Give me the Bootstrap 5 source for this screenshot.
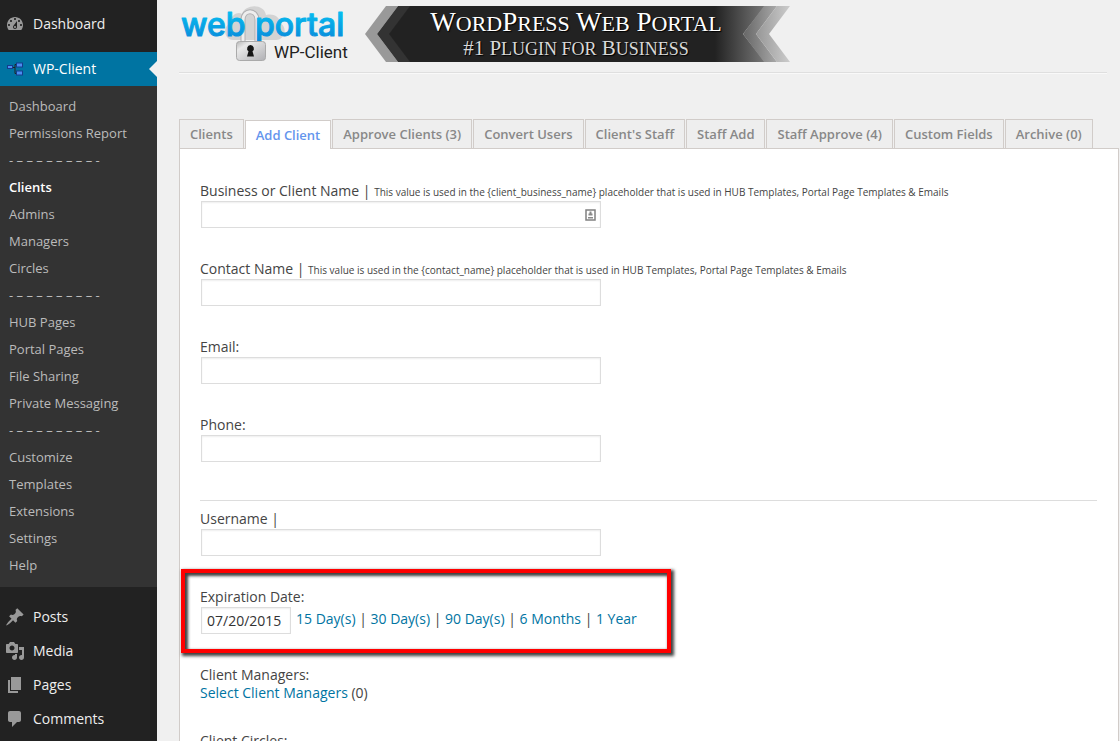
<!DOCTYPE html>
<html lang="en">
<head>
<meta charset="utf-8">
<meta name="viewport" content="width=device-width, initial-scale=1">
<title>Add Client</title>
<link rel="stylesheet" href="https://cdn.jsdelivr.net/npm/bootstrap@5.3.0/dist/css/bootstrap.min.css">
<style>
body { font-family: "Open Sans", sans-serif; font-size: 14px; line-height: 18px; color: #444; background: #f0f0f0; }
a { color: #0074a2; text-decoration: none; }

/* sidebar */
.side { width: 157px; background: #222; padding-top: 7px; }
.side-item { height: 34px; color: #eee; padding-left: 5px; gap: 8px; }
.side-item svg { width: 20px; height: 20px; fill: #999; }
.side-item.current { position: relative; background: #0074a2; color: #fff; margin-top: 11px; }
.side-item.current::after { content: ""; position: absolute; right: 0; top: 9px; border: 8px solid transparent; border-left: 0; border-right-color: #f0f0f0; }
.side-sub { background: #333; padding: 7px 0 8px; margin-bottom: 13px; font-size: 13px; line-height: 27px; }
.side-sub a { display: block; padding-left: 9px; color: #bbb; }
.side-sub a.here { color: #fff; font-weight: 600; }

/* header */
.content { min-width: 0; padding-left: 22px; }
.brand-row { margin-right: 13px; height: 73px; padding-top: 6px; border-bottom: 1px solid #dfdfdf; box-shadow: 0 1px 0 #f9f9f9; }
.brand-row svg { display: block; }

/* tabs */
.client-tabs { margin-top: 46px; gap: 1px; height: 29px; }
.client-tabs a { height: 29px; padding: 0 10px; border: 1px solid #d1ccc9; border-bottom: 0; background: #eee; color: #888; font-size: 13px; font-weight: 600; line-height: 29px; white-space: nowrap; }
.client-tabs a.active { position: relative; background: #fff; color: #6495ed; margin-top: 1px; }

/* form */
.panel { background: #fff; border: 1px solid #d1ccc9; margin-right: 1px; padding: 33px 21px 0 20px; }
.field { margin-bottom: 30px; }
.field label, .field-title { display: block; }
.field input { height: 27px; margin: 1px 1px 2px; padding: 3px 5px; border: 1px solid #ddd; border-radius: 0; font-size: 14px; line-height: 18px; color: #333; box-shadow: inset 0 1px 2px rgba(0,0,0,.07); }
.wide { width: 400px; }
.short { width: 90px; }
.hint { font-size: 10px; line-height: 12px; }
.rule { margin: 36px 0 9px; border-top: 1px solid #ddd; opacity: 1; }
.keybox { right: 3px; top: 8px; width: 13px; height: 14px; }
.callout-frame { left: -19px; top: -19px; width: 490px; height: 84px; border: 4px solid red; box-shadow: 2px 2px 3px 1px rgba(0,0,0,.75), inset 2px 2px 3px 1px rgba(0,0,0,.75); pointer-events: none; }
</style>
</head>
<body>
<div class="d-flex vh-100 overflow-hidden">
  <nav class="side flex-shrink-0" aria-label="Admin menu">
    <a href="#" class="side-item d-flex align-items-center"><svg viewBox="0 0 20 20"><path d="M3.76 16h12.48c1.1-1.37 1.76-3.11 1.76-5 0-4.42-3.58-8-8-8s-8 3.58-8 8c0 1.89.66 3.63 1.76 5zM10 4c.55 0 1 .45 1 1s-.45 1-1 1-1-.45-1-1 .45-1 1-1zM6 6c.55 0 1 .45 1 1s-.45 1-1 1-1-.45-1-1 .45-1 1-1zm8 0c.55 0 1 .45 1 1s-.45 1-1 1-1-.45-1-1 .45-1 1-1zm-5.37 5.55L12 7v6c0 1.1-.9 2-2 2s-2-.9-2-2c0-.57.24-1.08.63-1.45zM4 10c.55 0 1 .45 1 1s-.45 1-1 1-1-.45-1-1 .45-1 1-1zm12 0c.55 0 1 .45 1 1s-.45 1-1 1-1-.45-1-1 .45-1 1-1zm-5 3c0-.55-.45-1-1-1s-1 .45-1 1 .45 1 1 1 1-.45 1-1z"/></svg>Dashboard</a>
    <a href="#" class="side-item current d-flex align-items-center"><svg viewBox="0 0 20 20"><path d="M7 8.500h3M12 5.500h-2v9h2" fill="none" stroke="#222" stroke-width="1"/><g fill="#4a8df0" stroke="#143c8c"><rect x="2.500" y="6.500" width="5" height="3"/><rect x="11.500" y="4" width="6" height="4"/><rect x="11.500" y="12" width="6" height="4"/></g></svg>WP-Client</a>
    <div class="side-sub">
      <a href="#">Dashboard</a>
      <a href="#">Permissions Report</a>
      <a href="#">- – – – – – – – – -</a>
      <a href="#" class="here">Clients</a>
      <a href="#">Admins</a>
      <a href="#">Managers</a>
      <a href="#">Circles</a>
      <a href="#">- – – – – – – – – -</a>
      <a href="#">HUB Pages</a>
      <a href="#">Portal Pages</a>
      <a href="#">File Sharing</a>
      <a href="#">Private Messaging</a>
      <a href="#">- – – – – – – – – -</a>
      <a href="#">Customize</a>
      <a href="#">Templates</a>
      <a href="#">Extensions</a>
      <a href="#">Settings</a>
      <a href="#">Help</a>
    </div>
    <a href="#" class="side-item d-flex align-items-center"><svg viewBox="0 0 20 20"><path d="M10.440 3.020l1.820-1.820 6.360 6.350-1.830 1.820c-1.050-.68-2.480-.57-3.410.36l-.75.75c-.92.93-1.040 2.350-.35 3.410l-1.830 1.820-2.410-2.410-2.800 2.790c-.42.42-3.380 2.710-3.800 2.290s1.860-3.390 2.280-3.810l2.790-2.790L4.100 9.360l1.830-1.820c1.050.69 2.480.57 3.400-.36l.75-.75c.93-.92 1.050-2.350.36-3.410z"/></svg>Posts</a>
    <a href="#" class="side-item d-flex align-items-center"><svg viewBox="0 0 20 20"><path d="M13 11V4c0-.55-.45-1-1-1h-1.670L9 1H5L3.670 3H2c-.55 0-1 .45-1 1v7c0 .55.45 1 1 1h10c.55 0 1-.45 1-1zM7 4.500c1.380 0 2.500 1.120 2.500 2.500S8.380 9.500 7 9.500 4.500 8.380 4.500 7 5.620 4.500 7 4.500zM14 6h5v10.500c0 1.380-1.120 2.500-2.500 2.500S14 17.880 14 16.500s1.120-2.500 2.500-2.500c.17 0 .34.02.5.05V9h-3V6zm-4 8.050V13h2v3.500c0 1.380-1.120 2.500-2.500 2.500S7 17.880 7 16.500 8.120 14 9.500 14c.17 0 .34.02.5.05z"/></svg>Media</a>
    <a href="#" class="side-item d-flex align-items-center"><svg viewBox="0 0 20 20"><path d="M6 15V2h10v13H6zm-1 1h8v2H3V5h2v11z"/></svg>Pages</a>
    <a href="#" class="side-item d-flex align-items-center"><svg viewBox="0 0 20 20"><path d="M5 2h9c1.100 0 2 .9 2 2v7c0 1.100-.9 2-2 2h-2l-5 5v-5H5c-1.100 0-2-.9-2-2V4c0-1.100.9-2 2-2z"/></svg>Comments</a>
  </nav>

  <main class="content flex-grow-1">
    <header class="brand-row d-flex">
      <svg width="186" height="58" viewBox="0 0 186 58" role="img" aria-label="web portal WP-Client">
        <defs>
          <linearGradient id="blue" gradientUnits="userSpaceOnUse" x1="0" y1="6" x2="0" y2="36"><stop offset="0" stop-color="#06bdf0"/><stop offset="1" stop-color="#0a86d8"/></linearGradient>
          <linearGradient id="steel" x1="0" y1="0" x2="1" y2="1"><stop offset="0" stop-color="#b4b4b4"/><stop offset=".25" stop-color="#e9e9e9"/><stop offset="1" stop-color="#b0b0b4"/></linearGradient>
        </defs>
        <path d="M54 34c-9 0-11-14-2-17-1-8 7-12 11-9C66-2 85-3 87 9c9-2 14 3 14 8 8 4 5 17-4 17z" fill="#d3d3d3"/>
        <path d="M64 37V14c0-11 14-11 14 0v23" fill="none" stroke="#b0b0b2" stroke-width="5"/>
        <path d="M64 37V14c0-11 14-11 14 0v23" fill="none" stroke="#eee" stroke-width="3"/>
        <g font-family="Inter, sans-serif" font-weight="500" font-size="32" fill="url(#blue)" stroke="url(#blue)" stroke-width="1" stroke-linejoin="round">
          <text x="2" y="30">web</text><text x="76" y="30">portal</text>
        </g>
        <rect x="57.500" y="35.500" width="29" height="19" rx="3" fill="url(#steel)" stroke="#aaa"/>
        <path d="M71.500 39a3.500 3.500 0 0 1 2 6.300l1.500 5.200h-7l1.500-5.200a3.500 3.500 0 0 1 2-6.300z" fill="#161616"/>
        <text x="95" y="52" font-family="Roboto, sans-serif" font-size="17" fill="#222">WP-Client</text>
      </svg>
      <svg width="426" height="56" viewBox="0 0 426 56" role="img" aria-label="WordPress Web Portal, #1 Plugin for Business">
        <defs>
          <linearGradient id="ga" gradientUnits="userSpaceOnUse" x1="350" y1="0" x2="400" y2="0"><stop offset="0" stop-color="#222"/><stop offset="1" stop-color="#777"/></linearGradient>
          <linearGradient id="gb" gradientUnits="userSpaceOnUse" x1="378" y1="0" x2="413" y2="0"><stop offset="0" stop-color="#666"/><stop offset="1" stop-color="#aaa"/></linearGradient>
          <linearGradient id="gc" gradientUnits="userSpaceOnUse" x1="391" y1="0" x2="425" y2="0"><stop offset="0" stop-color="#969696"/><stop offset="1" stop-color="#ccc"/></linearGradient>
        </defs>
        <path d="M21 0h12L12 28l21 28H21L0 28z" fill="#999"/>
        <path d="M33 0h13L25 28l21 28H33L12 28z" fill="#333"/>
        <path d="M45 0h355l-22 28 22 28H45L24 28z" fill="url(#ga)"/>
        <path d="M399 0h13l-21 28 21 28h-13l-21-28z" fill="url(#gb)"/>
        <path d="M412 0h13l-21 28 21 28h-13l-21-28z" fill="url(#gc)"/>
        <g font-family="'Liberation Serif', serif" text-anchor="middle" style="text-shadow:1px 1px 1px #000">
          <text x="211" y="25" fill="#fff" font-size="27">W<tspan font-size="22">ORD</tspan>P<tspan font-size="22">RESS</tspan> W<tspan font-size="22">EB</tspan> P<tspan font-size="22">ORTAL</tspan></text>
          <text x="211" y="49" fill="#d8d8d8" font-size="21">#1 P<tspan font-size="18">LUGIN FOR</tspan> B<tspan font-size="18">USINESS</tspan></text>
        </g>
      </svg>
    </header>

    <nav class="client-tabs d-flex" aria-label="Client sections">
      <a href="#">Clients</a>
      <a href="#" class="active">Add Client</a>
      <a href="#">Approve Clients (3)</a>
      <a href="#">Convert Users</a>
      <a href="#">Client's Staff</a>
      <a href="#">Staff Add</a>
      <a href="#">Staff Approve (4)</a>
      <a href="#">Custom Fields</a>
      <a href="#">Archive (0)</a>
    </nav>

    <form class="panel">
      <div class="field">
        <label for="business">Business or Client Name | <span class="hint">This value is used in the {client_business_name} placeholder that is used in HUB Templates, Portal Page Templates &amp; Emails</span></label>
        <div class="position-relative d-flex wide">
          <input id="business" type="text" class="wide flex-shrink-0">
          <svg class="keybox position-absolute" viewBox="0 0 13 14"><rect x="2" y="2" width="9" height="10" fill="#fff" stroke="#808080" stroke-width="1.500"/><path d="M5.500 3.500h2v2h1v2h-4v-2h1zM4 9h5v1.500H4z" fill="#888"/></svg>
        </div>
      </div>
      <div class="field">
        <label for="contact">Contact Name | <span class="hint">This value is used in the {contact_name} placeholder that is used in HUB Templates, Portal Page Templates &amp; Emails</span></label>
        <div class="d-flex"><input id="contact" type="text" class="wide"></div>
      </div>
      <div class="field">
        <label for="email">Email:</label>
        <div class="d-flex"><input id="email" type="email" class="wide"></div>
      </div>
      <div class="field">
        <label for="phone">Phone:</label>
        <div class="d-flex"><input id="phone" type="tel" class="wide"></div>
      </div>
      <hr class="rule">
      <div class="field">
        <label for="username">Username |</label>
        <div class="d-flex"><input id="username" type="text" class="wide"></div>
      </div>
      <div class="field position-relative">
        <label for="expires">Expiration Date:</label>
        <div class="d-flex">
          <input id="expires" type="text" class="short" value="07/20/2015">
          <div class="ms-1 pt-1"><a href="#">15 Day(s)</a> | <a href="#">30 Day(s)</a> | <a href="#">90 Day(s)</a> | <a href="#">6 Months</a> | <a href="#">1 Year</a></div>
        </div>
        <div class="callout-frame position-absolute"></div>
      </div>
      <div class="field">
        <span class="field-title">Client Managers:</span>
        <a href="#">Select Client Managers</a> (0)
      </div>
      <div class="field">
        <span class="field-title">Client Circles:</span>
        <a href="#">Select Client Circles</a> (0)
      </div>
    </form>
  </main>
</div>
<script src="https://cdn.jsdelivr.net/npm/bootstrap@5.3.0/dist/js/bootstrap.bundle.min.js"></script>
</body>
</html>
